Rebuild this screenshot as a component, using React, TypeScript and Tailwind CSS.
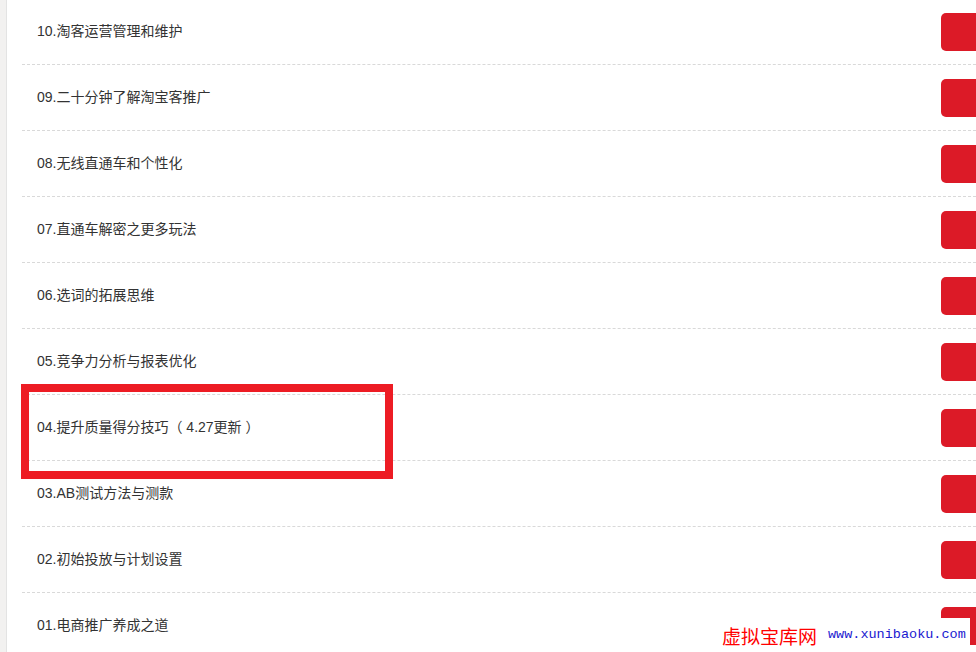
import React from "react";

const items = [
  "10.淘客运营管理和维护",
  "09.二十分钟了解淘宝客推广",
  "08.无线直通车和个性化",
  "07.直通车解密之更多玩法",
  "06.选词的拓展思维",
  "05.竞争力分析与报表优化",
  "04.提升质量得分技巧（ 4.27更新 ）",
  "03.AB测试方法与测款",
  "02.初始投放与计划设置",
  "01.电商推广养成之道",
];

export default function App() {
  return (
    <div
      className="relative w-[976px] h-[652px] overflow-hidden bg-white flex"
      style={{ fontFamily: '"Liberation Sans", "Noto Sans CJK SC", sans-serif' }}
    >
      <div className="w-[7px] shrink-0 bg-[#f2f1f0] border-r border-[#e3e3e3]" />
      <div className="flex-1 pl-[15px] -mt-px">
        {items.map((t) => (
          <div
            key={t}
            className="h-[66px] border-b border-dashed border-[#d9d9d9] flex items-center justify-between"
          >
            <span className="pl-[15px] text-[14px] text-[#333]">{t}</span>
            <div className="w-[80px] h-[38px] shrink-0 -mr-[45px] bg-[#dc1a27] rounded-[5px]" />
          </div>
        ))}
      </div>

      <div className="absolute left-[21px] top-[384px] w-[372px] h-[95px] border-[8px] border-[#ed1c24]" />

      <div className="absolute left-[716px] top-[618px] w-[254px] h-[34px] bg-white flex items-center gap-[11px] pl-[6px]">
        <span
          className="text-[19px] text-[#f00] leading-none"
          style={{ fontFamily: '"Noto Sans CJK SC", sans-serif' }}
        >
          虚拟宝库网
        </span>
        <span
          className="text-[13.5px] text-[#1a1ad0] leading-none"
          style={{ fontFamily: '"Liberation Mono", monospace' }}
        >
          www.xunibaoku.com
        </span>
      </div>
    </div>
  );
}
